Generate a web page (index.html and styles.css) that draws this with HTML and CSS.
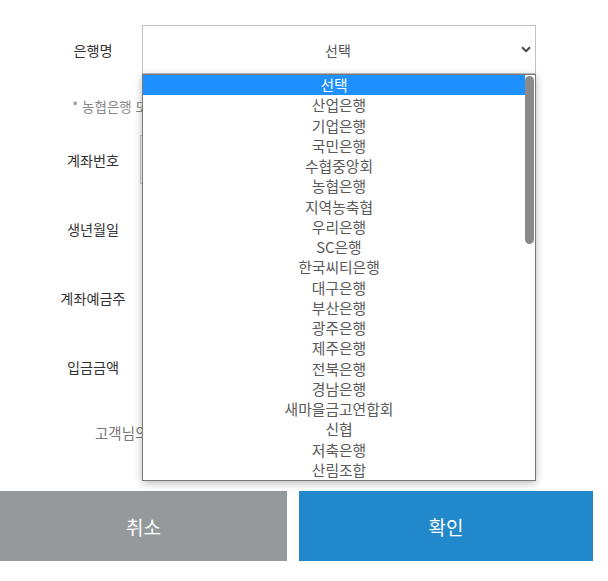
FILE: index.html
```html
<!DOCTYPE html>
<html lang="ko">
<head>
<meta charset="utf-8">
<title>계좌 등록</title>
<link rel="stylesheet" href="styles.css">
</head>
<body>
<div class="form">
  <div class="row row-bank">
    <div class="label">은행명</div>
    <div class="select-wrap">
      <div class="select">
        <span class="select-text">선택</span>
        <svg class="chev" width="10" height="7" viewBox="0 0 10 7"><path d="M1 1.2 L5 5.2 L9 1.2" fill="none" stroke="#444" stroke-width="2"/></svg>
      </div>
      <div class="dropdown">
        <ul class="options">
          <li class="opt active">선택</li>
          <li class="opt">산업은행</li>
          <li class="opt">기업은행</li>
          <li class="opt">국민은행</li>
          <li class="opt">수협중앙회</li>
          <li class="opt">농협은행</li>
          <li class="opt">지역농축협</li>
          <li class="opt">우리은행</li>
          <li class="opt">SC은행</li>
          <li class="opt">한국씨티은행</li>
          <li class="opt">대구은행</li>
          <li class="opt">부산은행</li>
          <li class="opt">광주은행</li>
          <li class="opt">제주은행</li>
          <li class="opt">전북은행</li>
          <li class="opt">경남은행</li>
          <li class="opt">새마을금고연합회</li>
          <li class="opt">신협</li>
          <li class="opt">저축은행</li>
          <li class="opt">산림조합</li>
        </ul>
        <div class="thumb"></div>
      </div>
    </div>
  </div>
  <p class="note note1">* 농협은행 또는 지역농축협 계좌는 구분하여 선택해 주세요.</p>
  <div class="row">
    <div class="label">계좌번호</div>
    <div class="input input-account"></div>
  </div>
  <div class="row">
    <div class="label">생년월일</div>
    <div class="field"></div>
  </div>
  <div class="row">
    <div class="label">계좌예금주</div>
    <div class="field"></div>
  </div>
  <div class="row">
    <div class="label">입금금액</div>
    <div class="field"></div>
  </div>
  <p class="note note2">고객님의 계좌로 1원이 입금됩니다.</p>
  <div class="buttons">
    <button class="btn btn-cancel">취소</button>
    <button class="btn btn-ok">확인</button>
  </div>
</div>
</body>
</html>
```

FILE: styles.css
```css
* { box-sizing: border-box; }
html, body {
  margin: 0;
  padding: 0;
  background: #fff;
  font-family: "Noto Sans CJK KR", "Noto Sans", sans-serif;
  overflow: hidden;
}
.form {
  padding-top: 25px;
  width: 608px;
}
.row {
  display: flex;
  align-items: center;
  height: 49px;
  padding-left: 44px;
  margin-bottom: 20px;
}
.row-bank { margin-bottom: 0; }
.label {
  width: 98px;
  text-align: center;
  font-size: 14.2px;
  color: #333;
  line-height: 20px;
}
.select-wrap {
  position: relative;
  width: 394px;
  height: 49px;
}
.select {
  height: 49px;
  border: 1px solid #c2c2c2;
  background: #fff;
  display: flex;
  align-items: center;
  padding-right: 4px;
}
.select-text {
  flex: 1;
  text-align: center;
  font-size: 14px;
  color: #555;
  padding-left: 12px;
}
.chev {
  display: block;
}
.dropdown {
  position: absolute;
  top: 49px;
  left: 0;
  width: 394px;
  height: 407px;
  border: 1px solid #7a7a7a;
  background: #fff;
  box-shadow: 0 2px 8px rgba(0, 0, 0, 0.28);
  overflow: hidden;
  z-index: 10;
}
.options {
  list-style: none;
  margin: 0;
  padding: 0;
}
.opt {
  height: 20.25px;
  line-height: 20.25px;
  text-align: center;
  font-size: 14.8px;
  color: #5a5a5a;
}
.opt.active {
  background: #1e90ff;
  color: #fff;
  margin-right: 10px;
}
.thumb {
  position: absolute;
  top: 1px;
  right: 1px;
  width: 9px;
  height: 168px;
  border-radius: 5px;
  background: #8a8a8a;
}
.note {
  margin: 0;
  font-size: 13.5px;
  line-height: 20px;
  color: #888;
  white-space: nowrap;
}
.note1 {
  padding-left: 72px;
  margin-top: 22px;
  margin-bottom: 19px;
}
.note2 {
  padding-left: 95px;
  margin-top: 32px;
  color: #777;
  font-size: 14.5px;
}
.input {
  width: 394px;
  height: 49px;
  border: 1px solid #c8c8c8;
}
.input-account { margin-left: -2px; }
.field {
  width: 394px;
  height: 49px;
}
.buttons {
  display: grid;
  grid-template-columns: 287px 294px;
  column-gap: 12px;
  margin-top: 48px;
}
.btn {
  height: 70px;
  border: 0;
  font-family: inherit;
  font-size: 19px;
  color: #fff;
  padding: 0;
}
.btn-cancel { background: #95999c; }
.btn-ok { background: #2288cc; }
```
